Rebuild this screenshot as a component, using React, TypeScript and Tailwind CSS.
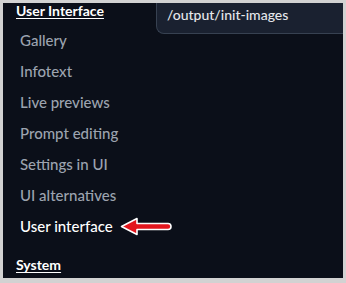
const ITEMS = [
  "Gallery",
  "Infotext",
  "Live previews",
  "Prompt editing",
  "Settings in UI",
  "UI alternatives",
]

function RedArrow() {
  return (
    <svg width="52" height="19" viewBox="0 0 52 19" className="shrink-0">
      <path
        d="M1.5 9.5 L17 1.5 L17 6.5 L48 6.5 Q51 6.5 51 9.5 Q51 12.5 48 12.5 L17 12.5 L17 17.5 Z"
        fill="#e3151c"
        stroke="#ffffff"
        strokeWidth="1.6"
        strokeLinejoin="round"
      />
    </svg>
  )
}

export default function App() {
  return (
    <div className="w-[346px] h-[283px] bg-[#d2d2d2] pt-[3px] pl-[3px] pr-[3px] pb-[5px]">
      <div
        className="flex h-full w-full overflow-hidden bg-[#0b0f19]"
        style={{ fontFamily: "Lato, 'Open Sans', sans-serif" }}
      >
        {/* settings nav */}
        <div className="flex w-[153px] shrink-0 flex-col">
          <div className="whitespace-nowrap pl-[13px] text-[14px] font-bold leading-[15px] text-white underline underline-offset-2">
            User Interface
          </div>
          <div className="mt-[7px] flex flex-col">
            {ITEMS.map((label) => (
              <div
                key={label}
                className="h-[31px] whitespace-nowrap pl-[17px] text-[15px] font-medium leading-[31px] text-[#9ca3af]"
              >
                {label}
              </div>
            ))}
            <div className="relative z-10 flex h-[31px] items-center gap-[7px] whitespace-nowrap pl-[17px] text-[15px] font-medium text-white">
              <span>User interface</span>
              <RedArrow />
            </div>
          </div>
          <div className="mt-[16px] whitespace-nowrap pl-[13px] text-[14px] font-bold leading-[14px] text-white underline underline-offset-2">
            System
          </div>
        </div>

        {/* path field */}
        <div className="flex-1">
          <div className="h-[31px] whitespace-nowrap rounded-bl-lg border-b border-l border-[#374151] bg-[#1a2130] pl-[10px] text-[14px] font-medium leading-[24px] text-[#e5e7eb]">
            /output/init-images
          </div>
        </div>
      </div>
    </div>
  )
}
